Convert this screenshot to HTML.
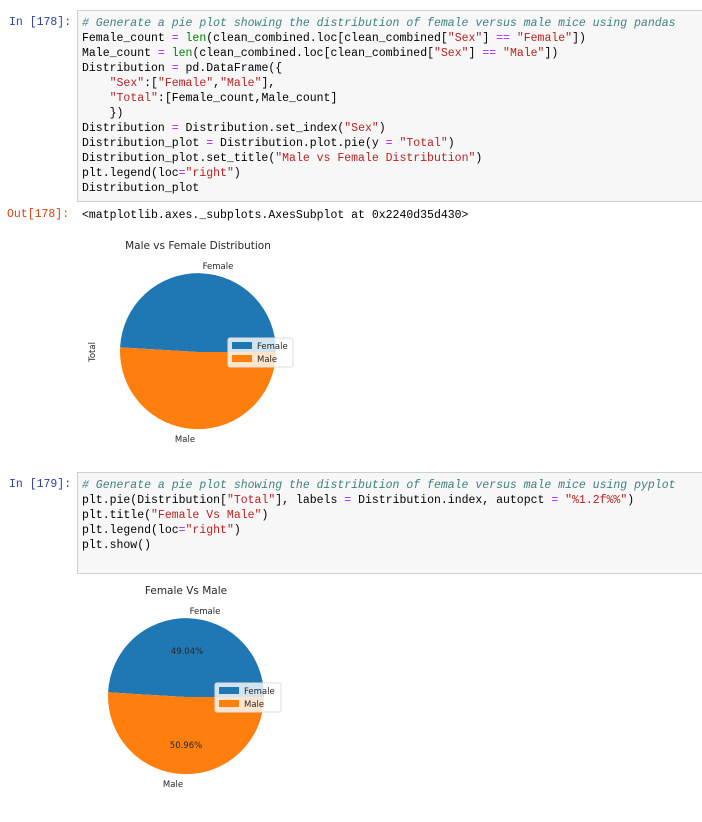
<!DOCTYPE html>
<html><head><meta charset="utf-8"><style>
body{margin:0;width:702px;height:822px;background:#fff;position:relative;overflow:hidden;font-family:"Liberation Mono",monospace}
.cell{position:absolute;left:77px;width:624px;background:#f7f7f7;border:1px solid #cfcfcf;}
.code{position:absolute;left:82px;font-size:11.5px;line-height:15px;white-space:pre;color:#000}
.pr{position:absolute;font-size:11.5px;white-space:pre}
.in{color:#303f9f}.out{color:#d84315}
.c{color:#408080;font-style:italic}.s{color:#ba2121}.o{color:#aa22ff}.b{color:#008000}
svg{position:absolute;left:0;top:0}
svg text{font-family:"DejaVu Sans",sans-serif;fill:#262626}
</style></head><body>
<div class="cell" style="top:10px;height:190px"></div>
<div class="pr in" style="left:9px;top:16px">In [178]:</div>
<div class="code" style="top:16px"><span class="c"># Generate a pie plot showing the distribution of female versus male mice using pandas</span>
Female_count <span class="o">=</span> <span class="b">len</span>(clean_combined.loc[clean_combined[<span class="s">"Sex"</span>] <span class="o">==</span> <span class="s">"Female"</span>])
Male_count <span class="o">=</span> <span class="b">len</span>(clean_combined.loc[clean_combined[<span class="s">"Sex"</span>] <span class="o">==</span> <span class="s">"Male"</span>])
Distribution <span class="o">=</span> pd.DataFrame({
    <span class="s">"Sex"</span>:[<span class="s">"Female"</span>,<span class="s">"Male"</span>],
    <span class="s">"Total"</span>:[Female_count,Male_count]
    })
Distribution <span class="o">=</span> Distribution.set_index(<span class="s">"Sex"</span>)
Distribution_plot <span class="o">=</span> Distribution.plot.pie(y <span class="o">=</span> <span class="s">"Total"</span>)
Distribution_plot.set_title(<span class="s">"Male vs Female Distribution"</span>)
plt.legend(loc<span class="o">=</span><span class="s">"right"</span>)
Distribution_plot</div>
<div class="pr out" style="left:7px;top:208px">Out[178]:</div>
<div class="code" style="top:208px">&lt;matplotlib.axes._subplots.AxesSubplot at 0x2240d35d430&gt;</div>

<div class="cell" style="top:472px;height:100px"></div>
<div class="pr in" style="left:9px;top:478px">In [179]:</div>
<div class="code" style="top:478px"><span class="c"># Generate a pie plot showing the distribution of female versus male mice using pyplot</span>
plt.pie(Distribution[<span class="s">"Total"</span>], labels <span class="o">=</span> Distribution.index, autopct <span class="o">=</span> <span class="s">"%1.2f%%"</span>)
plt.title(<span class="s">"Female Vs Male"</span>)
plt.legend(loc<span class="o">=</span><span class="s">"right"</span>)
plt.show()</div>

<svg width="702" height="822">
<path d="M198,352 L276,352 A78,78 0 0 0 120.1,347.3 Z" fill="#1f77b4"/>
<path d="M198,352 L120.1,347.3 A78,78 0 1 0 276,352 Z" fill="#ff7f0e"/>
<text x="198" y="249" font-size="10.5" text-anchor="middle">Male vs Female Distribution</text>
<text x="218" y="269" font-size="8.5" text-anchor="middle">Female</text>
<text x="185" y="442" font-size="8.5" text-anchor="middle">Male</text>
<text transform="translate(95,352) rotate(-90)" font-size="8.5" text-anchor="middle">Total</text>
<rect x="228" y="338" width="65" height="29" rx="2" fill="#fff" fill-opacity="0.8" stroke="#ddd"/>
<rect x="232" y="342" width="20" height="7" fill="#1f77b4"/>
<rect x="232" y="355" width="20" height="7" fill="#ff7f0e"/>
<text x="257" y="349" font-size="8.5">Female</text>
<text x="257" y="362" font-size="8.5">Male</text>

<path d="M186,697 L264,697 A78,78 0 0 0 108.1,692.3 Z" fill="#1f77b4"/>
<path d="M186,697 L108.1,692.3 A78,78 0 1 0 264,697 Z" fill="#ff7f0e"/>
<text x="186" y="594" font-size="10.5" text-anchor="middle">Female Vs Male</text>
<text x="205" y="614" font-size="8.5" text-anchor="middle">Female</text>
<text x="173" y="787" font-size="8.5" text-anchor="middle">Male</text>
<text x="187" y="654" font-size="8.5" text-anchor="middle">49.04%</text>
<text x="186" y="748" font-size="8.5" text-anchor="middle">50.96%</text>
<rect x="215" y="683" width="66" height="29" rx="2" fill="#fff" fill-opacity="0.8" stroke="#ddd"/>
<rect x="219" y="687" width="20" height="7" fill="#1f77b4"/>
<rect x="219" y="700" width="20" height="7" fill="#ff7f0e"/>
<text x="244" y="694" font-size="8.5">Female</text>
<text x="244" y="707" font-size="8.5">Male</text>
</svg>
</body></html>
